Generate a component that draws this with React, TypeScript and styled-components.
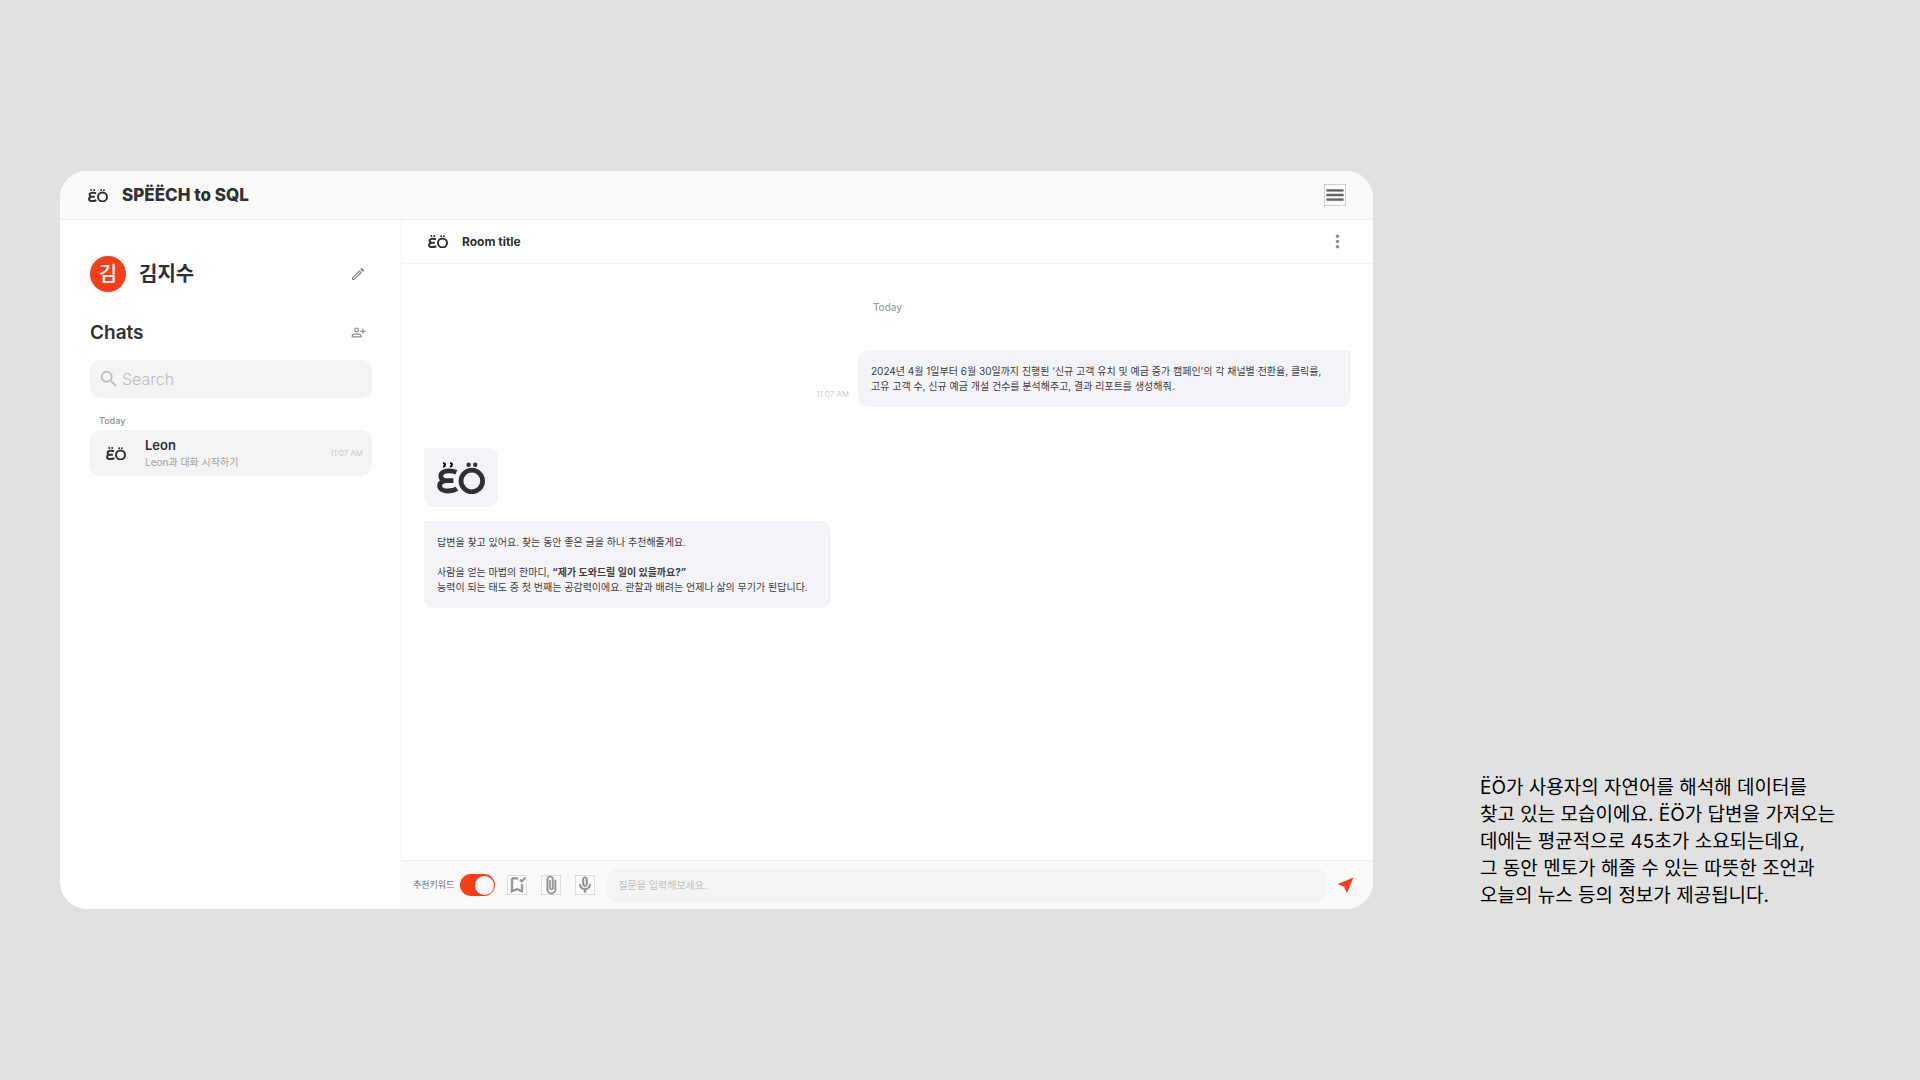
import React from "react";
import styled, { createGlobalStyle } from "styled-components";
import {
  MdMenu,
  MdMoreVert,
  MdOutlineModeEdit,
  MdOutlinePersonAddAlt,
  MdSearch,
  MdOutlineBookmarkAdded,
  MdAttachFile,
  MdMicNone,
  MdNearMe,
} from "react-icons/md";

const GlobalStyle = createGlobalStyle`
  *, *::before, *::after { box-sizing: border-box; }
  body {
    margin: 0;
    background: #e1e1e1;
    color: #303030;
    font-family: Inter, "Noto Sans CJK KR", sans-serif;
  }
  h1, h2, h3, p { margin: 0; }
  svg { display: block; flex: none; }
  button, input { font: inherit; color: inherit; }
`;

const Page = styled.div`
  display: grid;
  grid-template-columns: minmax(0, 1fr) 380px;
  column-gap: 107px;
  align-content: center;
  align-items: end;
  min-height: 100vh;
  padding: 0 60px;
`;

const Window = styled.div`
  display: flex;
  flex-direction: column;
  aspect-ratio: 16 / 9;
  overflow: hidden;
  border-radius: 27px;
  background: #fff;
`;

const TopBar = styled.header`
  display: flex;
  align-items: center;
  gap: 14px;
  height: 49px;
  flex: none;
  padding: 1px 27px 0 28px;
  background: #fafafa;
  border-bottom: 1px solid #eeeeee;
`;

const Brand = styled.h1`
  flex: 1;
  font-size: 17px;
  line-height: 24px;
  font-weight: 800;
`;

const IconButton = styled.button<{ $tone?: string; $bold?: boolean }>`
  display: grid;
  place-items: center;
  flex: none;
  padding: 0;
  border: 0;
  background: none;
  color: ${(p) => p.$tone ?? "#8e8e8e"};
  cursor: pointer;
  & > svg { stroke-width: ${(p) => (p.$bold ? "0.6px" : "0")}; }
`;

const Body = styled.div`
  display: flex;
  flex: 1;
  min-height: 0;
`;

const Sidebar = styled.aside`
  width: 342px;
  flex: none;
  padding: 36px 29px 0 30px;
  border-right: 1px solid #f4f4f4;
`;

const Profile = styled.div`
  display: flex;
  align-items: center;
  gap: 13px;
  height: 36px;
  padding-right: 6px;
`;

const Avatar = styled.span`
  display: grid;
  place-items: center;
  width: 36px;
  height: 36px;
  border-radius: 50%;
  background: #f83e18;
  color: #fff;
  font-size: 20px;
  line-height: 24px;
  font-weight: 500;
`;

const UserName = styled.h2`
  flex: 1;
  color: #2c3038;
  font-size: 20px;
  line-height: 28px;
  font-weight: 600;
`;

const ListHead = styled.div`
  display: flex;
  align-items: center;
  justify-content: space-between;
  height: 28px;
  margin-top: 27px;
  padding-right: 6px;
`;

const ListTitle = styled.h2`
  font-size: 19px;
  line-height: 28px;
  font-weight: 600;
`;

const SearchBox = styled.label`
  display: flex;
  align-items: center;
  gap: 2px;
  height: 38px;
  margin-top: 13px;
  padding: 0 8px;
  border-radius: 10px;
  background: #f4f4f4;
  color: #bdbdbd;
`;

const SearchInput = styled.input`
  flex: 1;
  min-width: 0;
  padding: 0;
  border: 0;
  outline: 0;
  background: none;
  font-size: 16px;
  line-height: 24px;
  font-weight: 300;
  &::placeholder { color: #bdbdbd; opacity: 1; }
`;

const GroupLabel = styled.h3`
  margin-top: 15px;
  padding-left: 9px;
  color: #8e8e8e;
  font-size: 9px;
  line-height: 15px;
  font-weight: 500;
`;

const ChatItem = styled.button`
  display: flex;
  align-items: center;
  width: 100%;
  height: 46px;
  margin-top: 2px;
  padding: 1px 9px 0 16px;
  border: 0;
  border-radius: 10px;
  background: #f4f4f4;
  text-align: left;
  cursor: pointer;
`;

const ChatText = styled.span`
  display: flex;
  flex-direction: column;
  flex: 1;
  padding-left: 19px;
`;

const ChatName = styled.strong`
  font-size: 13px;
  line-height: 18px;
  font-weight: 600;
`;

const ChatPreview = styled.span`
  color: #a3a3a3;
  font-size: 10px;
  line-height: 16px;
`;

const Time = styled.time`
  color: #c2c2c2;
  font-size: 8px;
  line-height: 12px;
  font-weight: 300;
`;

const Room = styled.main`
  display: flex;
  flex: 1;
  flex-direction: column;
  min-width: 0;
`;

const RoomBar = styled.div`
  display: flex;
  align-items: center;
  gap: 14px;
  height: 44px;
  flex: none;
  padding: 1px 25px 0 26px;
  border-bottom: 1px solid #f4f4f4;
`;

const RoomTitle = styled.h2`
  flex: 1;
  font-size: 12px;
  line-height: 16px;
  font-weight: 700;
`;

const Messages = styled.section`
  display: flex;
  flex: 1;
  flex-direction: column;
  align-items: flex-start;
  padding: 36px 22px 0 22px;
`;

const DayMark = styled.p`
  align-self: center;
  color: #9c9c9c;
  font-size: 10px;
  line-height: 15px;
  font-weight: 500;
`;

const SentRow = styled.div`
  display: flex;
  align-items: flex-end;
  align-self: flex-end;
  gap: 9px;
  margin: 35px 0 41px;
  & > ${Time} { margin-bottom: 7px; }
`;

const Bubble = styled.div<{ $sent?: boolean; $width?: number }>`
  min-width: ${(p) => (p.$width ? `${p.$width}px` : "0")};
  padding: 14px 13px 13px;
  border-radius: ${(p) => (p.$sent ? "10px 2px 10px 10px" : "2px 10px 10px 10px")};
  background: #f4f4f8;
  color: #3c3c3c;
  font-size: 10px;
  line-height: 15px;
  & + & { margin-top: 14px; }
`;

const Composer = styled.form`
  display: flex;
  align-items: center;
  height: 49px;
  flex: none;
  padding: 0 17px 0 11px;
  background: #fafafa;
  border-top: 1px solid #eeeeee;
`;

const SwitchLabel = styled.label`
  display: flex;
  align-items: center;
  gap: 6px;
  color: #6e6e6e;
  font-size: 9px;
  line-height: 14px;
`;

const Switch = styled.input`
  appearance: none;
  display: flex;
  align-items: center;
  width: 35px;
  height: 22px;
  margin: 0;
  padding: 0 1px;
  border-radius: 11px;
  background: #c8c8c8;
  cursor: pointer;
  &::before {
    content: "";
    width: 19px;
    height: 19px;
    border-radius: 50%;
    background: #fafafa;
  }
  &:checked {
    justify-content: flex-end;
    background: #f83e18;
  }
`;

const Tools = styled.div`
  display: flex;
  gap: 14px;
  padding: 0 12px;
`;

const Prompt = styled.input`
  flex: 1;
  min-width: 0;
  height: 33px;
  margin-right: 9px;
  padding: 0 11px;
  border: 0;
  border-radius: 10px;
  outline: 0;
  background: #f4f4f4;
  font-size: 10px;
  line-height: 15px;
  &::placeholder { color: #c2c2c2; opacity: 1; }
`;

const Note = styled.p`
  color: #000;
  font-size: 19px;
  line-height: 27px;
  white-space: nowrap;
`;

function Logo({ width, winking }: { width: number; winking?: boolean }) {
  return (
    <svg width={width} viewBox="0 0 48 32" fill="none" role="img" aria-label="ËÖ">
      <g stroke="#303030" strokeWidth="4.8">
        <path d="M19.4 10.2C16.8 9 14 8.7 11.5 8.8C7 9 3.8 10.9 3.8 14C3.8 17 6.5 18.7 10 18.7H16.4M10 18.7C5.5 18.7 2.6 20.6 2.6 23.8C2.6 27.2 6.5 29 11 29C14.5 29 17.5 28.4 20 26.8" />
        <circle cx="34.8" cy="19" r="10.8" />
      </g>
      {winking ? (
        <path
          stroke="#000"
          strokeWidth="2"
          d="M6 1.2C8.6 1 8.8 4 6 4.8M13 1.2C15.6 1 15.8 4 13 4.8"
        />
      ) : (
        <g fill="#303030">
          <circle cx="8" cy="2.6" r="2.4" />
          <circle cx="15" cy="2.6" r="2.4" />
        </g>
      )}
      <g fill="#303030">
        <circle cx="31.6" cy="2.8" r="2.2" />
        <circle cx="38.2" cy="2.8" r="2.2" />
      </g>
    </svg>
  );
}

export default function App() {
  return (
    <>
      <GlobalStyle />
      <Page>
        <Window>
          <TopBar>
            <Logo width={20} />
            <Brand>SPËËCH to SQL</Brand>
            <IconButton type="button" aria-label="Menu" $tone="#666666" $bold>
              <MdMenu size={22} />
            </IconButton>
          </TopBar>
          <Body>
            <Sidebar>
              <Profile>
                <Avatar>김</Avatar>
                <UserName>김지수</UserName>
                <IconButton type="button" aria-label="Edit profile">
                  <MdOutlineModeEdit size={16} />
                </IconButton>
              </Profile>
              <ListHead>
                <ListTitle>Chats</ListTitle>
                <IconButton type="button" aria-label="Add person">
                  <MdOutlinePersonAddAlt size={15} />
                </IconButton>
              </ListHead>
              <SearchBox>
                <MdSearch size={22} aria-hidden />
                <SearchInput type="search" placeholder="Search" aria-label="Search" />
              </SearchBox>
              <GroupLabel>Today</GroupLabel>
              <ChatItem type="button">
                <Logo width={20} />
                <ChatText>
                  <ChatName>Leon</ChatName>
                  <ChatPreview>Leon과 대화 시작하기</ChatPreview>
                </ChatText>
                <Time>11:07 AM</Time>
              </ChatItem>
            </Sidebar>
            <Room>
              <RoomBar>
                <Logo width={20} />
                <RoomTitle>Room title</RoomTitle>
                <IconButton type="button" aria-label="Room options">
                  <MdMoreVert size={21} />
                </IconButton>
              </RoomBar>
              <Messages>
                <DayMark>Today</DayMark>
                <SentRow>
                  <Time>11:07 AM</Time>
                  <Bubble $sent $width={493}>
                    2024년 4월 1일부터 6월 30일까지 진행된 ‘신규 고객 유치 및 예금 증가 캠페인’의 각 채널별 전환율, 클릭률,
                    <br />
                    고유 고객 수, 신규 예금 개설 건수를 분석해주고, 결과 리포트를 생성해줘.
                  </Bubble>
                </SentRow>
                <Bubble>
                  <Logo width={48} winking />
                </Bubble>
                <Bubble $width={407}>
                  답변을 찾고 있어요. 찾는 동안 좋은 글을 하나 추천해줄게요.
                  <br />
                  <br />
                  사람을 얻는 마법의 한마디, <b>“제가 도와드릴 일이 있을까요?”</b>
                  <br />
                  능력이 되는 태도 중 첫 번째는 공감력이에요. 관찰과 배려는 언제나 삶의 무기가 된답니다.
                </Bubble>
              </Messages>
              <Composer onSubmit={(e) => e.preventDefault()}>
                <SwitchLabel>
                  추천키워드
                  <Switch type="checkbox" role="switch" defaultChecked />
                </SwitchLabel>
                <Tools>
                  <IconButton type="button" aria-label="Saved prompts" $bold>
                    <MdOutlineBookmarkAdded size={20} />
                  </IconButton>
                  <IconButton type="button" aria-label="Attach file" $bold>
                    <MdAttachFile size={20} />
                  </IconButton>
                  <IconButton type="button" aria-label="Voice input" $bold>
                    <MdMicNone size={20} />
                  </IconButton>
                </Tools>
                <Prompt placeholder="질문을 입력해보세요." aria-label="질문" />
                <IconButton type="submit" aria-label="Send" $tone="#f83e18">
                  <MdNearMe size={20} />
                </IconButton>
              </Composer>
            </Room>
          </Body>
        </Window>
        <Note>
          ËÖ가 사용자의 자연어를 해석해 데이터를
          <br />
          찾고 있는 모습이에요. ËÖ가 답변을 가져오는
          <br />
          데에는 평균적으로 45초가 소요되는데요,
          <br />
          그 동안 멘토가 해줄 수 있는 따뜻한 조언과
          <br />
          오늘의 뉴스 등의 정보가 제공됩니다.
        </Note>
      </Page>
    </>
  );
}
